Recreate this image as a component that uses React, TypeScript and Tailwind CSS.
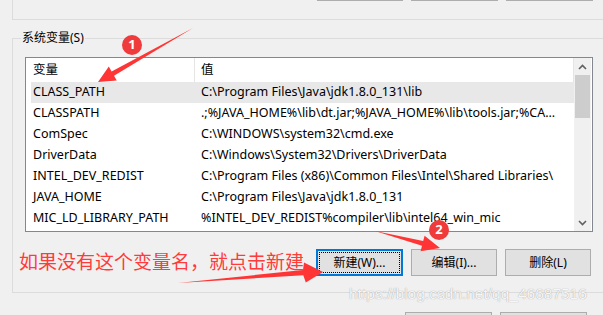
const rows: [string, string][] = [
  ['CLASS_PATH', 'C:\\Program Files\\Java\\jdk1.8.0_131\\lib'],
  ['CLASSPATH', '.;%JAVA_HOME%\\lib\\dt.jar;%JAVA_HOME%\\lib\\tools.jar;%CA...'],
  ['ComSpec', 'C:\\WINDOWS\\system32\\cmd.exe'],
  ['DriverData', 'C:\\Windows\\System32\\Drivers\\DriverData'],
  ['INTEL_DEV_REDIST', 'C:\\Program Files (x86)\\Common Files\\Intel\\Shared Libraries\\'],
  ['JAVA_HOME', 'C:\\Program Files\\Java\\jdk1.8.0_131'],
  ['MIC_LD_LIBRARY_PATH', '%INTEL_DEV_REDIST%compiler\\lib\\intel64_win_mic'],
]

function WinButton({ label, focused, className = '' }: { label?: string; focused?: boolean; className?: string }) {
  if (focused) {
    return (
      <div className={`flex h-[27px] w-[87px] shrink-0 border-2 border-[#0078d7] bg-[#e1e1e1] p-[1px] ${className}`}>
        <div className="flex flex-1 items-center justify-center border border-dotted border-black">{label}</div>
      </div>
    )
  }
  return (
    <div className={`flex h-[27px] w-[86px] shrink-0 items-center justify-center border border-[#adadad] bg-[#e1e1e1] ${className}`}>
      {label}
    </div>
  )
}

function Chevron({ up }: { up?: boolean }) {
  return (
    <svg width="9" height="6" viewBox="0 0 9 6">
      <polyline
        points={up ? '1,5 4.5,1.5 8,5' : '1,1 4.5,4.5 8,1'}
        fill="none"
        stroke="#606060"
        strokeWidth="1.6"
      />
    </svg>
  )
}

export default function App() {
  return (
    <div className="relative h-[315px] w-[603px] overflow-hidden bg-[#f0f0f0] font-['Noto_Sans','Noto_Sans_CJK_SC',sans-serif] text-[12px] text-black">
      {/* upper group (user vars), only its bottom edge is visible */}
      <div className="ml-[12px] flex h-[20px] items-start gap-[8px] border-b border-l border-[#dcdcdc] pl-[304px]">
        <WinButton className="-mt-[26px]" />
        <WinButton className="-mt-[26px] w-[87px]" />
        <WinButton className="-mt-[26px] w-[87px]" />
      </div>

      <fieldset className="ml-[12px] mt-[10px] w-[640px] border border-r-0 border-[#dcdcdc] p-0 pb-[16px]">
        <legend className="ml-[8px] px-[1px] leading-[16px]">系统变量(S)</legend>

        <div className="ml-[12px] mt-[11px] flex h-[175px] w-[568px] border border-[#828790] bg-white text-[12.5px]">
          <div className="flex min-w-0 flex-1 flex-col overflow-hidden">
            <div className="flex h-[24px] shrink-0 items-center">
              <div className="w-[168px] pl-[7px]">变量</div>
              <div className="h-full w-px bg-[#e5e5e5]" />
              <div className="flex-1 pl-[6px]">值</div>
              <div className="h-full w-px bg-[#e5e5e5]" />
            </div>
            {rows.map(([name, value], i) => (
              <div key={name} className="h-[21px] shrink-0 pl-[5px]">
                <div className={`flex h-full items-center whitespace-nowrap ${i === 0 ? 'bg-[#e8e8e8]' : ''}`}>
                  <div className="w-[163px] shrink-0 pl-[2px]">{name}</div>
                  <div className="pl-[7px]">{value}</div>
                </div>
              </div>
            ))}
          </div>
          <div className="mr-[1px] flex w-[17px] flex-col bg-[#f0f0f0]">
            <div className="flex h-[17px] items-center justify-center">
              <Chevron up />
            </div>
            <div className="mx-[1px] h-[43px] bg-[#cdcdcd]" />
            <div className="flex-1" />
            <div className="flex h-[17px] items-center justify-center">
              <Chevron />
            </div>
          </div>
        </div>

        <div className="mt-[17px] flex items-center">
          <span className="ml-[6px] w-[297px] shrink-0 whitespace-nowrap text-[19px] leading-[27px] text-[#ff3b3b]">
            如果没有这个变量名，就点击新建
          </span>
          <div className="flex gap-[8px]">
            <WinButton label="新建(W)..." focused />
            <WinButton label="编辑(I)..." />
            <WinButton label="删除(L)" />
          </div>
        </div>
      </fieldset>

      <div className="mt-[19px] flex gap-[8px] pl-[405px]">
        <WinButton className="w-[87px]" />
        <WinButton className="w-[87px]" />
      </div>

      {/* watermark */}
      <div className="pointer-events-none absolute left-[349px] top-[284px] font-['Liberation_Sans',Arial,sans-serif] text-[15.5px] leading-[20px] text-[#f6f6f6] [text-shadow:0_0_1px_#8f8f8f]">
        https://blog.csdn.net/qq_46687516
      </div>

      {/* annotation arrows */}
      <svg className="pointer-events-none absolute left-0 top-0" width="603" height="315" viewBox="0 0 603 315">
        <g fill="#ff3535">
          <polygon points="193,28 111.6,71.4 108.8,66.6 98,82 116.8,80.6 114,75.8" />
          <polygon points="178,283 303,270 304,262.5 323,272 305.8,282.5 303.3,275.3" />
          <polygon points="375,231 423.2,241 424.6,235.7 440,248 420.6,251.2 422,245.8" />
        </g>
      </svg>

      <div className="absolute left-[122px] top-[35px] flex h-[20px] w-[20px] items-center justify-center rounded-full bg-[#ef3b3b] text-[13px] font-bold text-white">
        1
      </div>
      <div className="absolute left-[429px] top-[220px] flex h-[20px] w-[20px] items-center justify-center rounded-full bg-[#ef3b3b] text-[13px] font-bold text-white">
        2
      </div>
    </div>
  )
}
